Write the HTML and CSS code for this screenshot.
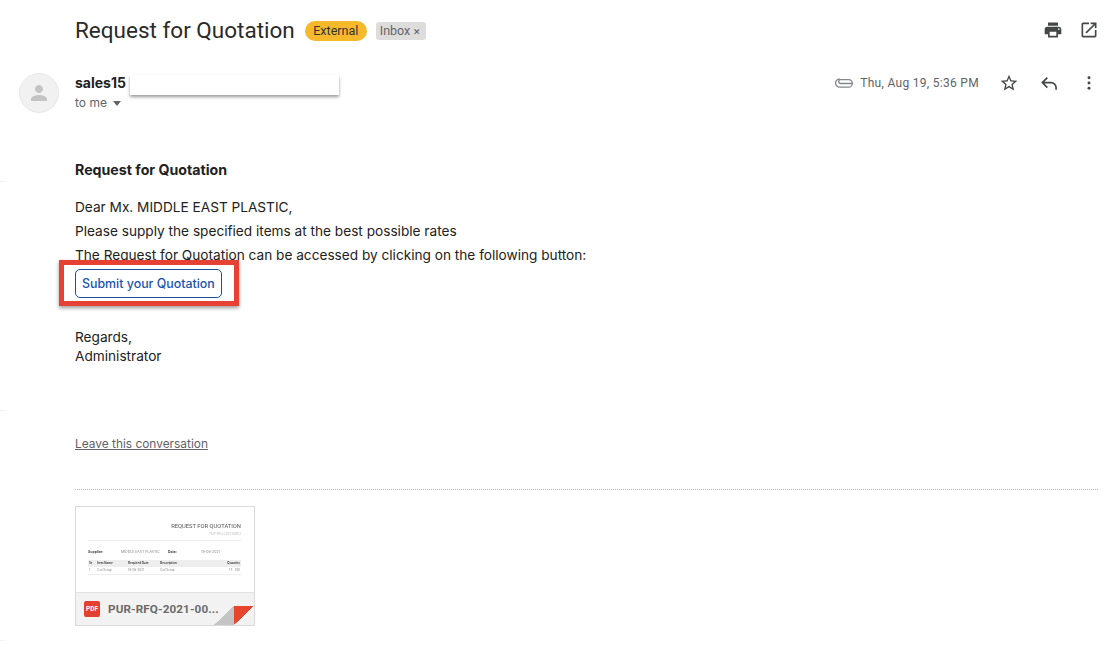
FILE: index.html
```html
<!DOCTYPE html>
<html lang="en">
<head>
<meta charset="utf-8">
<title>Request for Quotation</title>
<link rel="stylesheet" href="styles.css">
</head>
<body>
<header class="subject-row">
  <h1 class="subject">Request for Quotation</h1>
  <span class="tag-external">External</span>
  <span class="tag-inbox">Inbox <span class="tag-x">✕</span></span>
  <div class="subject-actions">
    <svg viewBox="0 0 24 24" width="20" height="20"><path fill="#444746" d="M19 8H5c-1.66 0-3 1.34-3 3v6h4v4h12v-4h4v-6c0-1.66-1.34-3-3-3zm-3 11H8v-5h8v5zm3-7c-.55 0-1-.45-1-1s.45-1 1-1 1 .45 1 1-.45 1-1 1zm-1-9H6v4h12V3z"/></svg>
    <svg viewBox="0 0 24 24" width="20" height="20"><path fill="#444746" d="M19 19H5V5h7V3H5c-1.11 0-2 .9-2 2v14c0 1.1.89 2 2 2h14c1.1 0 2-.9 2-2v-7h-2v7zM14 3v2h3.59l-9.83 9.83 1.41 1.41L19 6.41V10h2V3h-7z"/></svg>
  </div>
</header>

<section class="message-head">
  <div class="avatar">
    <svg viewBox="0 0 24 24" width="24" height="24"><path fill="#c4c4c4" d="M12 12c2.2 0 4-1.8 4-4s-1.800-4-4-4-4 1.800-4 4 1.800 4 4 4zm0 2c-2.700 0-8 1.300-8 4v2h16v-2c0-2.700-5.300-4-8-4z"/></svg>
  </div>
  <div class="sender">
    <div class="sender-name">sales15</div>
    <div class="to-me">to me <span class="caret"></span></div>
    <div class="redact"></div>
  </div>
  <div class="meta">
    <svg class="icon-clip" viewBox="0 0 18 12" width="18" height="12"><path fill="none" stroke="#80868b" stroke-width="1.300" d="M17 6.500H5.200a2 2 0 0 1 0-3.900h8.400a3.300 3.300 0 0 1 0 7.600H4.800a4.100 4.100 0 0 1-.2-8.200"/></svg>
    <span class="date">Thu, Aug 19, 5:36 PM</span>
    <svg class="icon-star" viewBox="0 0 24 24" width="20" height="20"><path fill="#444746" d="M22 9.240l-7.190-.62L12 2 9.190 8.630 2 9.240l5.460 4.730L5.820 21 12 17.270 18.180 21l-1.630-7.030L22 9.240zM12 15.400l-3.760 2.270 1-4.280-3.320-2.880 4.380-.38L12 6.100l1.710 4.040 4.380.38-3.320 2.880 1 4.280L12 15.400z"/></svg>
    <svg class="icon-reply" viewBox="0 0 24 24" width="20" height="20"><path fill="none" stroke="#444746" stroke-width="2" d="M10 5.500L4 11.500L10 17.500M4 11.500H14.500a6 6 0 0 1 6 6V20"/></svg>
    <svg class="icon-more" viewBox="0 0 4 16" width="4" height="14"><circle cx="2" cy="2" r="1.700" fill="#444746"/><circle cx="2" cy="8" r="1.700" fill="#444746"/><circle cx="2" cy="14" r="1.700" fill="#444746"/></svg>
  </div>
</section>

<main class="body">
  <h2 class="rfq-title">Request for Quotation</h2>
  <p class="line">Dear Mx. MIDDLE EAST PLASTIC,</p>
  <p class="line">Please supply the specified items at the best possible rates</p>
  <p class="line">The Request for Quotation can be accessed by clicking on the following button:</p>
  <div class="cta-wrap">
    <a class="cta">Submit your Quotation</a>
    <div class="annotation"></div>
  </div>
  <p class="regards">Regards,<br>Administrator</p>
  <a class="leave">Leave this conversation</a>
</main>

<section class="attachments">
  <div class="card">
    <div class="preview">
      <div class="doc-title">REQUEST FOR QUOTATION</div>
      <div class="doc-sub">PUR-RFQ-2021-00012</div>
      <div class="doc-rule"></div>
      <div class="doc-info">
        <b class="c1">Supplier:</b><span class="c2">MIDDLE EAST PLASTIC</span><b class="c3">Date:</b><span>19-08-2021</span>
      </div>
      <div class="doc-table">
        <div class="doc-row head"><span class="t1">Sr</span><span class="t2">Item Name</span><span class="t3">Required Date</span><span class="t4">Description</span><span class="t5">Quantity</span></div>
        <div class="doc-row"><span class="t1">1</span><span class="t2">Coil Scrap</span><span class="t3">19-08-2021</span><span class="t4">Coil Scrap</span><span class="t5">TF &nbsp; 100</span></div>
      </div>
    </div>
    <div class="card-foot">
      <span class="pdf">PDF</span>
      <span class="filename">PUR-RFQ-2021-00...</span>
      <div class="fold"></div>
    </div>
  </div>
</section>
<div class="edge-ticks"></div>
</body>
</html>
```

FILE: styles.css
```css
* { box-sizing: border-box; }
html, body { margin: 0; padding: 0; }
body {
  position: relative;
  width: 1111px;
  height: 656px;
  overflow: hidden;
  background: #fff;
  color: #222;
  font-family: Inter, "Liberation Sans", sans-serif;
  font-size: 13.650px;
}
.subject-row {
  display: flex;
  align-items: center;
  height: 40px;
  margin-top: 10px;
  padding-left: 75px;
  padding-right: 12px;
}
.subject {
  margin: 0;
  font-family: Roboto, sans-serif;
  font-weight: 400;
  font-size: 22.500px;
  color: #2a2a2a;
}
.tag-external {
  margin-left: 10px;
  margin-top: 2px;
  height: 20px;
  line-height: 20px;
  padding: 0 8.500px;
  border-radius: 10px;
  background: #f6b92c;
  color: #333;
  font-family: Roboto, sans-serif;
  font-size: 12.500px;
}
.tag-inbox {
  margin-left: 9px;
  margin-top: 2px;
  height: 18px;
  line-height: 18px;
  padding: 0 5px 0 4px;
  border-radius: 3px;
  background: #dddddd;
  color: #666;
  font-family: Roboto, sans-serif;
  font-size: 12.500px;
}
.tag-x { font-size: 9px; color: #555; }
.subject-actions { margin-left: auto; display: flex; gap: 16px; }

.message-head {
  display: flex;
  margin-top: 23px;
  padding-left: 19px;
  padding-right: 20px;
}
.avatar {
  width: 40px;
  height: 40px;
  border-radius: 50%;
  background: #f1f1f1;
  border: 1px solid #e8e8e8;
  display: flex;
  align-items: center;
  justify-content: center;
}
.sender { position: relative; margin-left: 16px; flex: 1; }
.sender-name { font-weight: 700; font-size: 14px; line-height: 20px; color: #222; }
.to-me { font-size: 12px; line-height: 20px; color: #5f6368; display: flex; align-items: center; gap: 6px; }
.caret { width: 0; height: 0; border: 4px solid transparent; border-top: 5px solid #5f6368; border-bottom: 0; }
.redact {
  position: absolute;
  left: 55px;
  top: 2px;
  width: 209px;
  height: 20px;
  background: #fff;
  box-shadow: 0 2px 3px rgba(0,0,0,.4);
}
.meta { display: flex; align-items: center; height: 20px; }
.date { margin-left: 7px; font-family: Roboto, sans-serif; font-size: 12px; letter-spacing: .3px; color: #5f6368; }
.icon-star { margin-left: 20px; }
.icon-reply { margin-left: 20px; }
.icon-more { margin-left: 28px; }

.body { padding-left: 75px; margin-top: 47px; }
.rfq-title { margin: 0 0 17px; font-size: 14.200px; line-height: 20px; font-weight: 700; color: #222; }
.line { margin: 0 0 4px; line-height: 20px; color: #222; }
.cta-wrap { position: relative; height: 29px; }
.cta {
  display: inline-block;
  height: 29px;
  line-height: 27px;
  padding: 0 6px;
  border: 1px solid #1c4f9c;
  border-radius: 5px;
  color: #1a55ad;
  font-size: 12.400px;
  font-weight: 500;
}
.annotation {
  position: absolute;
  left: -16px;
  top: -9px;
  width: 180px;
  height: 46px;
  border: 5px solid #e64234;
  box-shadow: 0 2px 4px rgba(0,0,0,.4);
}
.regards { margin: 30px 0 0; line-height: 19px; color: #222; }
.leave {
  display: inline-block;
  margin-top: 70px;
  color: #5f6368;
  font-size: 11.900px;
  text-decoration: underline;
}
.attachments { margin: 38px 13px 0 75px; border-top: 1px dotted #bbb; padding-top: 16px; }
.card {
  width: 180px;
  height: 120px;
  border: 1px solid #dadada;
  position: relative;
  overflow: hidden;
}
.preview { height: 85px; padding: 16px 13px 0 12px; color: #666; filter: blur(.3px); }
.doc-title { text-align: right; font-size: 5.800px; line-height: 7px; font-family: Roboto, sans-serif; color: #555; }
.doc-sub { text-align: right; font-size: 3px; line-height: 5px; margin-top: 2px; color: #bbb; }
.doc-rule { border-top: 1px solid #eee; margin-top: 3px; }
.doc-info { display: flex; font-size: 3.500px; line-height: 5px; margin-top: 9px; color: #888; }
.c1 { width: 33px; color: #444; }
.c2 { width: 47px; }
.c3 { width: 33px; color: #444; }
.doc-table { margin-top: 5px; border-bottom: 1px solid #eee; }
.doc-row { display: flex; font-size: 3px; line-height: 7px; padding: 0 1px; color: #888; }
.doc-row.head { background: #eee; color: #444; font-weight: 700; }
.t1 { width: 8px; } .t2 { width: 31px; } .t3 { width: 32px; } .t4 { width: 62px; } .t5 { flex: 1; text-align: right; }
.card-foot {
  height: 33px;
  background: #f2f2f2;
  border-top: 1px solid #e2e2e2;
  display: flex;
  align-items: center;
  padding-left: 8px;
  position: relative;
}
.pdf {
  width: 16px;
  height: 16px;
  border-radius: 2px;
  background: #e5402f;
  color: #fff;
  font-family: Roboto, sans-serif;
  font-size: 6.500px;
  font-weight: 700;
  line-height: 16px;
  text-align: center;
}
.filename {
  margin-left: 8px;
  font-family: Roboto, sans-serif;
  font-size: 11.700px;
  font-weight: 700;
  letter-spacing: .1px;
  color: #6b6b6b;
}
.fold {
  position: absolute;
  right: 0;
  bottom: 0;
  width: 40px;
  height: 19px;
  background:
    linear-gradient(to bottom right, #e8452f 0 49.500%, transparent 50%) right top / 20px 19px no-repeat,
    linear-gradient(to bottom right, transparent 0 49.500%, #c4c4c4 50%) left top / 20px 19px no-repeat;
}
.edge-ticks {
  position: absolute;
  left: 0;
  top: 0;
  width: 10px;
  height: 656px;
  background:
    linear-gradient(to right, #eee, transparent) 0 181px / 10px 1px no-repeat,
    linear-gradient(to right, #eee, transparent) 0 410px / 10px 1px no-repeat,
    linear-gradient(to right, #eee, transparent) 0 640px / 10px 1px no-repeat;
}
```
